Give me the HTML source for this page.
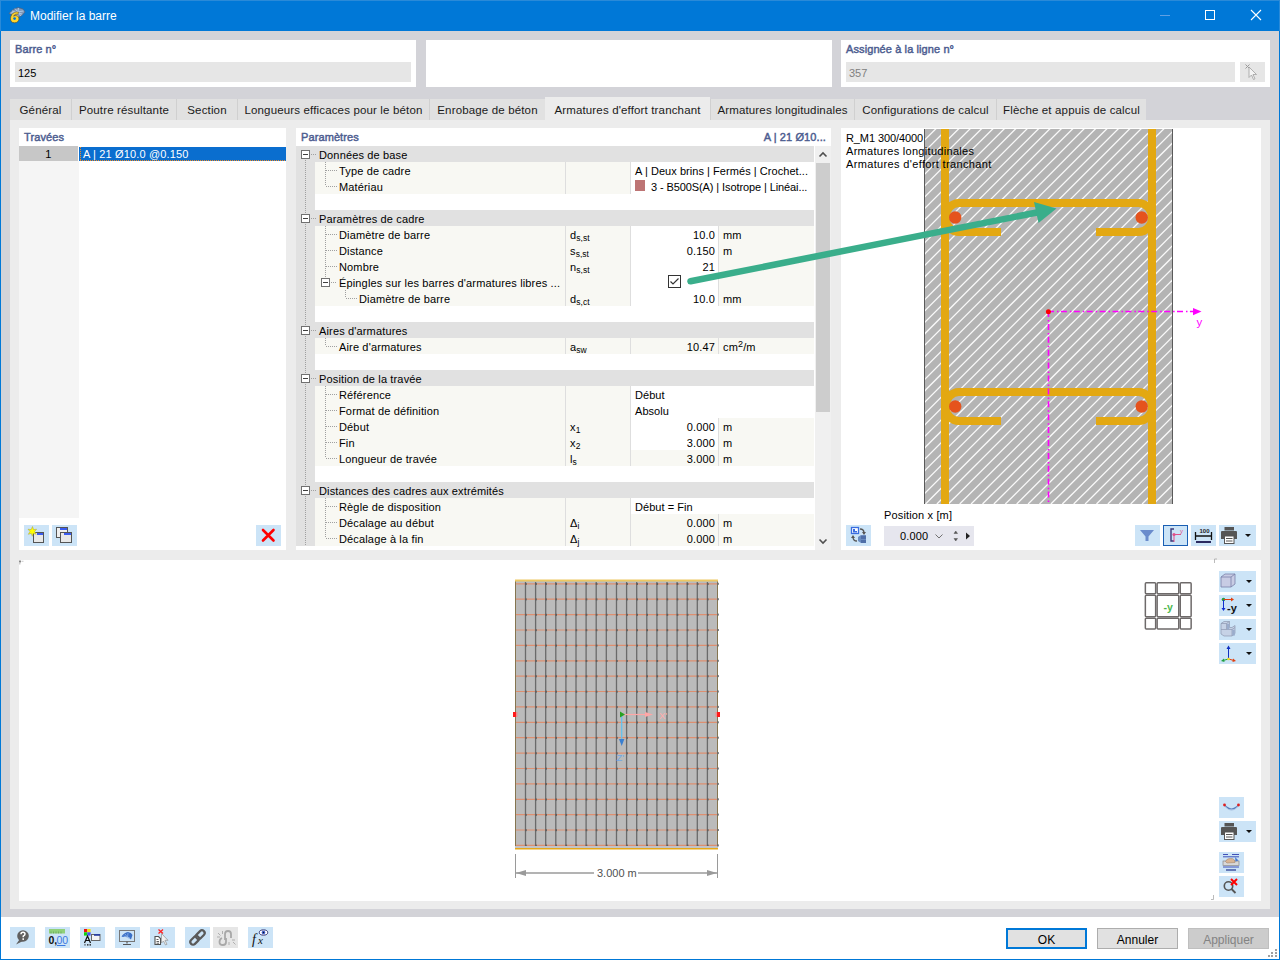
<!DOCTYPE html>
<html><head><meta charset="utf-8">
<style>
*{margin:0;padding:0;box-sizing:border-box}
html,body{width:1280px;height:960px;overflow:hidden;background:#fff}
body{font-family:"Liberation Sans",sans-serif;font-size:12px;color:#000;position:relative}
.a{position:absolute}
.t{position:absolute;white-space:nowrap;line-height:14px}
#win{left:0;top:0;width:1280px;height:960px;background:#0078d7}
#title{left:1px;top:1px;width:1278px;height:30px;background:#0078d7}
#body{left:1px;top:31px;width:1278px;height:886px;background:#d3d3d8}
#foot{left:1px;top:917px;width:1278px;height:42px;background:#fff}
.box{position:absolute;background:#fff}
.lbl{position:absolute;color:#4d5d90;font-weight:normal;-webkit-text-stroke:0.45px #4d5d90;font-size:11px;letter-spacing:0.1px;white-space:nowrap}
.tb{font-size:11px;letter-spacing:0.15px}
.inp{position:absolute;background:#e6e6e6}
.tab{position:absolute;top:99px;height:21px;background:#e1e1e1;border-left:1px solid #d0d0d0;text-align:center;line-height:23px;font-size:11.5px;letter-spacing:0.15px;color:#1a1a1a;white-space:nowrap}
.btn{position:absolute;background:#cce4f7}
.sym sub{font-size:8.5px;vertical-align:-2px;line-height:0;letter-spacing:0}
.sym{}
sup{font-size:9px;vertical-align:4px;line-height:0}
</style></head><body>
<div id="win" class="a"></div>
<div id="title" class="a"></div>
<div class="a" style="left:0;top:0;width:1280px;height:1px;background:#2a8ad8"></div>
<div class="a" style="left:1279px;top:0;width:1px;height:31px;background:#2a8ad8"></div>
<div class="a" style="left:0;top:0;width:1px;height:31px;background:#2a8ad8"></div>
<div class="t" style="left:30px;top:9px;color:#fff;font-size:12px">Modifier la barre</div>
<div id="body" class="a"></div>
<div id="foot" class="a"></div>

<!-- top boxes -->
<div class="box" style="left:10px;top:40px;width:406px;height:47px"></div>
<div class="lbl" style="left:15px;top:43px">Barre n°</div>
<div class="inp" style="left:15px;top:62px;width:396px;height:20px"></div>
<div class="t" style="left:18px;top:66px;font-size:11px">125</div>
<div class="box" style="left:426px;top:40px;width:406px;height:47px"></div>
<div class="box" style="left:841px;top:40px;width:429px;height:47px"></div>
<div class="lbl" style="left:846px;top:43px">Assignée à la ligne n°</div>
<div class="inp" style="left:846px;top:62px;width:389px;height:20px"></div>
<div class="t" style="left:849px;top:66px;font-size:11px;color:#808080">357</div>
<div class="inp" style="left:1240px;top:62px;width:25px;height:20px"></div>

<!-- tabs -->
<div class="a" style="left:10px;top:120px;width:1260px;height:789px;background:#ececec"></div>
<div class="tab" style="left:10px;width:61px;border-left:none">Général</div>
<div class="tab" style="left:71px;width:105px">Poutre résultante</div>
<div class="tab" style="left:176px;width:61px">Section</div>
<div class="tab" style="left:237px;width:192px">Longueurs efficaces pour le béton</div>
<div class="tab" style="left:429px;width:116px">Enrobage de béton</div>
<div class="tab" style="left:545px;top:97px;height:23px;width:165px;background:#ececec;border:none;line-height:27px">Armatures d'effort tranchant</div>
<div class="tab" style="left:710px;width:144px">Armatures longitudinales</div>
<div class="tab" style="left:854px;width:142px">Configurations de calcul</div>
<div class="tab" style="left:996px;width:150px">Flèche et appuis de calcul</div>

<!-- panels -->
<div class="box" style="left:19px;top:128px;width:267px;height:422px"></div>
<div class="box" style="left:296px;top:128px;width:535px;height:422px"></div>
<div class="box" style="left:841px;top:128px;width:420px;height:422px"></div>
<!-- middle panel content -->
<div class="lbl" style="left:301px;top:131px">Paramètres</div>
<div class="lbl" style="left:600px;top:131px;width:226px;text-align:right">A | 21 Ø10...</div>
<div class="a" style="left:296px;top:146px;width:19px;height:400px;background:#e1e1e1"></div>
<div class="a" style="left:296px;top:146px;width:518px;height:16px;background:#e1e1e1"></div>
<div class="t tb" style="left:319px;top:147px;line-height:16px">Données de base</div>
<div class="a" style="left:315px;top:162px;width:499px;height:16px;background:#f8f8f3"></div>
<div class="a" style="left:631px;top:162px;width:183px;height:16px;background:#fff"></div>
<div class="a" style="left:565px;top:162px;width:1px;height:16px;background:#dedede"></div>
<div class="a" style="left:630px;top:162px;width:1px;height:16px;background:#dedede"></div>
<div class="t tb" style="left:339px;top:163px;line-height:16px">Type de cadre</div>
<div class="t tb" style="left:635px;top:163px;line-height:16px;letter-spacing:0.05px">A | Deux brins | Fermés | Crochet...</div>
<div class="a" style="left:315px;top:178px;width:499px;height:16px;background:#f8f8f3"></div>
<div class="a" style="left:631px;top:178px;width:183px;height:16px;background:#fff"></div>
<div class="a" style="left:565px;top:178px;width:1px;height:16px;background:#dedede"></div>
<div class="a" style="left:630px;top:178px;width:1px;height:16px;background:#dedede"></div>
<div class="t tb" style="left:339px;top:179px;line-height:16px">Matériau</div>
<div class="a" style="left:635px;top:180px;width:10px;height:11px;background:#bd7474"></div>
<div class="t tb" style="left:651px;top:179px;line-height:16px;letter-spacing:-0.1px">3 - B500S(A) | Isotrope | Linéai...</div>
<div class="a" style="left:296px;top:210px;width:518px;height:16px;background:#e1e1e1"></div>
<div class="t tb" style="left:319px;top:211px;line-height:16px">Paramètres de cadre</div>
<div class="a" style="left:315px;top:226px;width:499px;height:16px;background:#f8f8f3"></div>
<div class="a" style="left:631px;top:226px;width:87px;height:16px;background:#fff"></div>
<div class="a" style="left:565px;top:226px;width:1px;height:16px;background:#dedede"></div>
<div class="a" style="left:630px;top:226px;width:1px;height:16px;background:#dedede"></div>
<div class="a" style="left:718px;top:226px;width:1px;height:16px;background:#dedede"></div>
<div class="t tb" style="left:339px;top:227px;line-height:16px">Diamètre de barre</div>
<div class="t tb sym" style="left:570px;top:227px;line-height:16px">d<sub>s,st</sub></div>
<div class="t tb" style="left:631px;top:227px;width:84px;text-align:right;line-height:16px">10.0</div>
<div class="t tb" style="left:723px;top:227px;line-height:16px">mm</div>
<div class="a" style="left:315px;top:242px;width:499px;height:16px;background:#f8f8f3"></div>
<div class="a" style="left:631px;top:242px;width:87px;height:16px;background:#fff"></div>
<div class="a" style="left:565px;top:242px;width:1px;height:16px;background:#dedede"></div>
<div class="a" style="left:630px;top:242px;width:1px;height:16px;background:#dedede"></div>
<div class="a" style="left:718px;top:242px;width:1px;height:16px;background:#dedede"></div>
<div class="t tb" style="left:339px;top:243px;line-height:16px">Distance</div>
<div class="t tb sym" style="left:570px;top:243px;line-height:16px">s<sub>s,st</sub></div>
<div class="t tb" style="left:631px;top:243px;width:84px;text-align:right;line-height:16px">0.150</div>
<div class="t tb" style="left:723px;top:243px;line-height:16px">m</div>
<div class="a" style="left:315px;top:258px;width:499px;height:16px;background:#f8f8f3"></div>
<div class="a" style="left:631px;top:258px;width:87px;height:16px;background:#fff"></div>
<div class="a" style="left:565px;top:258px;width:1px;height:16px;background:#dedede"></div>
<div class="a" style="left:630px;top:258px;width:1px;height:16px;background:#dedede"></div>
<div class="a" style="left:718px;top:258px;width:1px;height:16px;background:#dedede"></div>
<div class="t tb" style="left:339px;top:259px;line-height:16px">Nombre</div>
<div class="t tb sym" style="left:570px;top:259px;line-height:16px">n<sub>s,st</sub></div>
<div class="t tb" style="left:631px;top:259px;width:84px;text-align:right;line-height:16px">21</div>
<div class="a" style="left:315px;top:274px;width:499px;height:16px;background:#f8f8f3"></div>
<div class="a" style="left:631px;top:274px;width:87px;height:16px;background:#fff"></div>
<div class="a" style="left:565px;top:274px;width:1px;height:16px;background:#dedede"></div>
<div class="a" style="left:630px;top:274px;width:1px;height:16px;background:#dedede"></div>
<div class="a" style="left:718px;top:274px;width:1px;height:16px;background:#dedede"></div>
<div class="t tb" style="left:339px;top:275px;line-height:16px">Épingles sur les barres d'armatures libres ...</div>
<div class="a" style="left:668px;top:275px;width:13px;height:13px;border:1px solid #333;background:#fff"></div>
<svg class="a" style="left:668px;top:275px" width="13" height="13"><path d="M2.5 6.5 L5 9 L10.5 3.5" stroke="#333" stroke-width="1.2" fill="none"/></svg>
<div class="a" style="left:315px;top:290px;width:499px;height:16px;background:#f8f8f3"></div>
<div class="a" style="left:631px;top:290px;width:87px;height:16px;background:#fff"></div>
<div class="a" style="left:565px;top:290px;width:1px;height:16px;background:#dedede"></div>
<div class="a" style="left:630px;top:290px;width:1px;height:16px;background:#dedede"></div>
<div class="a" style="left:718px;top:290px;width:1px;height:16px;background:#dedede"></div>
<div class="t tb" style="left:359px;top:291px;line-height:16px">Diamètre de barre</div>
<div class="t tb sym" style="left:570px;top:291px;line-height:16px">d<sub>s,ct</sub></div>
<div class="t tb" style="left:631px;top:291px;width:84px;text-align:right;line-height:16px">10.0</div>
<div class="t tb" style="left:723px;top:291px;line-height:16px">mm</div>
<div class="a" style="left:296px;top:322px;width:518px;height:16px;background:#e1e1e1"></div>
<div class="t tb" style="left:319px;top:323px;line-height:16px">Aires d'armatures</div>
<div class="a" style="left:315px;top:338px;width:499px;height:16px;background:#f8f8f3"></div>
<div class="a" style="left:565px;top:338px;width:1px;height:16px;background:#dedede"></div>
<div class="a" style="left:630px;top:338px;width:1px;height:16px;background:#dedede"></div>
<div class="a" style="left:718px;top:338px;width:1px;height:16px;background:#dedede"></div>
<div class="t tb" style="left:339px;top:339px;line-height:16px">Aire d'armatures</div>
<div class="t tb sym" style="left:570px;top:339px;line-height:16px">a<sub>sw</sub></div>
<div class="t tb" style="left:631px;top:339px;width:84px;text-align:right;line-height:16px">10.47</div>
<div class="t tb" style="left:723px;top:339px;line-height:16px">cm<sup>2</sup>/m</div>
<div class="a" style="left:296px;top:370px;width:518px;height:16px;background:#e1e1e1"></div>
<div class="t tb" style="left:319px;top:371px;line-height:16px">Position de la travée</div>
<div class="a" style="left:315px;top:386px;width:499px;height:16px;background:#f8f8f3"></div>
<div class="a" style="left:631px;top:386px;width:183px;height:16px;background:#fff"></div>
<div class="a" style="left:565px;top:386px;width:1px;height:16px;background:#dedede"></div>
<div class="a" style="left:630px;top:386px;width:1px;height:16px;background:#dedede"></div>
<div class="t tb" style="left:339px;top:387px;line-height:16px">Référence</div>
<div class="t tb" style="left:635px;top:387px;line-height:16px;letter-spacing:0.05px">Début</div>
<div class="a" style="left:315px;top:402px;width:499px;height:16px;background:#f8f8f3"></div>
<div class="a" style="left:631px;top:402px;width:183px;height:16px;background:#fff"></div>
<div class="a" style="left:565px;top:402px;width:1px;height:16px;background:#dedede"></div>
<div class="a" style="left:630px;top:402px;width:1px;height:16px;background:#dedede"></div>
<div class="t tb" style="left:339px;top:403px;line-height:16px">Format de définition</div>
<div class="t tb" style="left:635px;top:403px;line-height:16px;letter-spacing:0.05px">Absolu</div>
<div class="a" style="left:315px;top:418px;width:499px;height:16px;background:#f8f8f3"></div>
<div class="a" style="left:631px;top:418px;width:87px;height:16px;background:#fff"></div>
<div class="a" style="left:565px;top:418px;width:1px;height:16px;background:#dedede"></div>
<div class="a" style="left:630px;top:418px;width:1px;height:16px;background:#dedede"></div>
<div class="a" style="left:718px;top:418px;width:1px;height:16px;background:#dedede"></div>
<div class="t tb" style="left:339px;top:419px;line-height:16px">Début</div>
<div class="t tb sym" style="left:570px;top:419px;line-height:16px">x<sub>1</sub></div>
<div class="t tb" style="left:631px;top:419px;width:84px;text-align:right;line-height:16px">0.000</div>
<div class="t tb" style="left:723px;top:419px;line-height:16px">m</div>
<div class="a" style="left:315px;top:434px;width:499px;height:16px;background:#f8f8f3"></div>
<div class="a" style="left:631px;top:434px;width:87px;height:16px;background:#fff"></div>
<div class="a" style="left:565px;top:434px;width:1px;height:16px;background:#dedede"></div>
<div class="a" style="left:630px;top:434px;width:1px;height:16px;background:#dedede"></div>
<div class="a" style="left:718px;top:434px;width:1px;height:16px;background:#dedede"></div>
<div class="t tb" style="left:339px;top:435px;line-height:16px">Fin</div>
<div class="t tb sym" style="left:570px;top:435px;line-height:16px">x<sub>2</sub></div>
<div class="t tb" style="left:631px;top:435px;width:84px;text-align:right;line-height:16px">3.000</div>
<div class="t tb" style="left:723px;top:435px;line-height:16px">m</div>
<div class="a" style="left:315px;top:450px;width:499px;height:16px;background:#f8f8f3"></div>
<div class="a" style="left:565px;top:450px;width:1px;height:16px;background:#dedede"></div>
<div class="a" style="left:630px;top:450px;width:1px;height:16px;background:#dedede"></div>
<div class="a" style="left:718px;top:450px;width:1px;height:16px;background:#dedede"></div>
<div class="t tb" style="left:339px;top:451px;line-height:16px">Longueur de travée</div>
<div class="t tb sym" style="left:570px;top:451px;line-height:16px">l<sub>s</sub></div>
<div class="t tb" style="left:631px;top:451px;width:84px;text-align:right;line-height:16px">3.000</div>
<div class="t tb" style="left:723px;top:451px;line-height:16px">m</div>
<div class="a" style="left:296px;top:482px;width:518px;height:16px;background:#e1e1e1"></div>
<div class="t tb" style="left:319px;top:483px;line-height:16px">Distances des cadres aux extrémités</div>
<div class="a" style="left:315px;top:498px;width:499px;height:16px;background:#f8f8f3"></div>
<div class="a" style="left:631px;top:498px;width:183px;height:16px;background:#fff"></div>
<div class="a" style="left:565px;top:498px;width:1px;height:16px;background:#dedede"></div>
<div class="a" style="left:630px;top:498px;width:1px;height:16px;background:#dedede"></div>
<div class="t tb" style="left:339px;top:499px;line-height:16px">Règle de disposition</div>
<div class="t tb" style="left:635px;top:499px;line-height:16px;letter-spacing:0.05px">Début = Fin</div>
<div class="a" style="left:315px;top:514px;width:499px;height:16px;background:#f8f8f3"></div>
<div class="a" style="left:565px;top:514px;width:1px;height:16px;background:#dedede"></div>
<div class="a" style="left:630px;top:514px;width:1px;height:16px;background:#dedede"></div>
<div class="a" style="left:718px;top:514px;width:1px;height:16px;background:#dedede"></div>
<div class="t tb" style="left:339px;top:515px;line-height:16px">Décalage au début</div>
<div class="t tb sym" style="left:570px;top:515px;line-height:16px">&Delta;<sub>i</sub></div>
<div class="t tb" style="left:631px;top:515px;width:84px;text-align:right;line-height:16px">0.000</div>
<div class="t tb" style="left:723px;top:515px;line-height:16px">m</div>
<div class="a" style="left:315px;top:530px;width:499px;height:16px;background:#f8f8f3"></div>
<div class="a" style="left:565px;top:530px;width:1px;height:16px;background:#dedede"></div>
<div class="a" style="left:630px;top:530px;width:1px;height:16px;background:#dedede"></div>
<div class="a" style="left:718px;top:530px;width:1px;height:16px;background:#dedede"></div>
<div class="t tb" style="left:339px;top:531px;line-height:16px">Décalage à la fin</div>
<div class="t tb sym" style="left:570px;top:531px;line-height:16px">&Delta;<sub>j</sub></div>
<div class="t tb" style="left:631px;top:531px;width:84px;text-align:right;line-height:16px">0.000</div>
<div class="t tb" style="left:723px;top:531px;line-height:16px">m</div>
<svg class="a" style="left:0;top:0;pointer-events:none" width="1280" height="960" shape-rendering="crispEdges"><line x1="305.5" y1="160" x2="305.5" y2="546" stroke="#a0a0a0" stroke-dasharray="1,1"/><rect x="301.5" y="150.5" width="8" height="8" fill="#fff" stroke="#707070"/><line x1="303" y1="154.5" x2="308" y2="154.5" stroke="#404040"/><line x1="311" y1="154.5" x2="317" y2="154.5" stroke="#a0a0a0" stroke-dasharray="1,1"/><rect x="301.5" y="214.5" width="8" height="8" fill="#fff" stroke="#707070"/><line x1="303" y1="218.5" x2="308" y2="218.5" stroke="#404040"/><line x1="311" y1="218.5" x2="317" y2="218.5" stroke="#a0a0a0" stroke-dasharray="1,1"/><rect x="301.5" y="326.5" width="8" height="8" fill="#fff" stroke="#707070"/><line x1="303" y1="330.5" x2="308" y2="330.5" stroke="#404040"/><line x1="311" y1="330.5" x2="317" y2="330.5" stroke="#a0a0a0" stroke-dasharray="1,1"/><rect x="301.5" y="374.5" width="8" height="8" fill="#fff" stroke="#707070"/><line x1="303" y1="378.5" x2="308" y2="378.5" stroke="#404040"/><line x1="311" y1="378.5" x2="317" y2="378.5" stroke="#a0a0a0" stroke-dasharray="1,1"/><rect x="301.5" y="486.5" width="8" height="8" fill="#fff" stroke="#707070"/><line x1="303" y1="490.5" x2="308" y2="490.5" stroke="#404040"/><line x1="311" y1="490.5" x2="317" y2="490.5" stroke="#a0a0a0" stroke-dasharray="1,1"/><line x1="325.5" y1="162" x2="325.5" y2="186" stroke="#a0a0a0" stroke-dasharray="1,1"/><line x1="326" y1="170.5" x2="337" y2="170.5" stroke="#a0a0a0" stroke-dasharray="1,1"/><line x1="326" y1="186.5" x2="337" y2="186.5" stroke="#a0a0a0" stroke-dasharray="1,1"/><line x1="325.5" y1="226" x2="325.5" y2="282" stroke="#a0a0a0" stroke-dasharray="1,1"/><line x1="326" y1="234.5" x2="337" y2="234.5" stroke="#a0a0a0" stroke-dasharray="1,1"/><line x1="326" y1="250.5" x2="337" y2="250.5" stroke="#a0a0a0" stroke-dasharray="1,1"/><line x1="326" y1="266.5" x2="337" y2="266.5" stroke="#a0a0a0" stroke-dasharray="1,1"/><rect x="321.5" y="278.5" width="8" height="8" fill="#fff" stroke="#707070"/><line x1="323" y1="282.5" x2="328" y2="282.5" stroke="#404040"/><line x1="331" y1="282.5" x2="337" y2="282.5" stroke="#a0a0a0" stroke-dasharray="1,1"/><line x1="345.5" y1="290" x2="345.5" y2="298" stroke="#a0a0a0" stroke-dasharray="1,1"/><line x1="346" y1="298.5" x2="357" y2="298.5" stroke="#a0a0a0" stroke-dasharray="1,1"/><line x1="325.5" y1="338" x2="325.5" y2="346" stroke="#a0a0a0" stroke-dasharray="1,1"/><line x1="326" y1="346.5" x2="337" y2="346.5" stroke="#a0a0a0" stroke-dasharray="1,1"/><line x1="325.5" y1="386" x2="325.5" y2="458" stroke="#a0a0a0" stroke-dasharray="1,1"/><line x1="326" y1="394.5" x2="337" y2="394.5" stroke="#a0a0a0" stroke-dasharray="1,1"/><line x1="326" y1="410.5" x2="337" y2="410.5" stroke="#a0a0a0" stroke-dasharray="1,1"/><line x1="326" y1="426.5" x2="337" y2="426.5" stroke="#a0a0a0" stroke-dasharray="1,1"/><line x1="326" y1="442.5" x2="337" y2="442.5" stroke="#a0a0a0" stroke-dasharray="1,1"/><line x1="326" y1="458.5" x2="337" y2="458.5" stroke="#a0a0a0" stroke-dasharray="1,1"/><line x1="325.5" y1="498" x2="325.5" y2="538" stroke="#a0a0a0" stroke-dasharray="1,1"/><line x1="326" y1="506.5" x2="337" y2="506.5" stroke="#a0a0a0" stroke-dasharray="1,1"/><line x1="326" y1="522.5" x2="337" y2="522.5" stroke="#a0a0a0" stroke-dasharray="1,1"/><line x1="326" y1="538.5" x2="337" y2="538.5" stroke="#a0a0a0" stroke-dasharray="1,1"/></svg>
<div class="a" style="left:815px;top:146px;width:16px;height:404px;background:#f0f0f0"></div>
<div class="a" style="left:816px;top:163px;width:14px;height:249px;background:#cdcdcd"></div>
<svg class="a" style="left:815px;top:146px" width="16" height="17"><path d="M4.5 10.5 L8 7 L11.5 10.5" stroke="#505050" stroke-width="1.6" fill="none"/></svg>
<svg class="a" style="left:815px;top:533px" width="16" height="17"><path d="M4.5 6.5 L8 10 L11.5 6.5" stroke="#505050" stroke-width="1.6" fill="none"/></svg>
<div class="box" style="left:19px;top:560px;width:1242px;height:341px"></div>
<!-- left panel content -->
<div class="lbl" style="left:24px;top:131px">Travées</div>
<div class="a" style="left:19px;top:161px;width:60px;height:357px;background:#f5f5f5"></div>
<div class="a" style="left:19px;top:146px;width:59px;height:15px;background:#c7c7c7"></div>
<div class="t tb" style="left:19px;top:147px;width:59px;text-align:center;line-height:15px">1</div>
<div class="a" style="left:79px;top:147px;width:207px;height:14px;background:#0a6ecf"></div>
<svg class="a" style="left:79px;top:146px" width="207" height="16" shape-rendering="crispEdges"><line x1="1.5" y1="1" x2="1.5" y2="15" stroke="#f08a24" stroke-dasharray="1,1"/><line x1="1" y1="14.5" x2="207" y2="14.5" stroke="#f08a24" stroke-dasharray="1,1"/></svg>
<div class="t tb" style="left:83px;top:147px;color:#fff;line-height:15px">A | 21 Ø10.0 @0.150</div>
<div class="btn" style="left:24px;top:525px;width:25px;height:21px"></div>
<svg class="a" style="left:24px;top:525px" width="25" height="21">
 <rect x="9.5" y="7.5" width="10" height="10" fill="#e8e8e8" stroke="#555"/>
 <rect x="13" y="8" width="6" height="2" fill="#3a5cf0"/>
 <path d="M8.5 1.5 L9.6 4.6 L12.6 4.2 L10.6 6.5 L12.2 9.3 L9.2 8.4 L8.3 11.3 L7.3 8.4 L4.3 9.3 L6 6.5 L4 4.2 L7.2 4.6 Z" fill="#ffff00" stroke="#a8a040" stroke-width="0.5"/>
</svg>
<div class="btn" style="left:52px;top:525px;width:25px;height:21px"></div>
<svg class="a" style="left:52px;top:525px" width="25" height="21">
 <rect x="4.5" y="2.5" width="11" height="10" fill="#f0f0f0" stroke="#555"/>
 <rect x="8" y="3" width="7" height="2" fill="#3a5cf0"/>
 <rect x="8.5" y="7.5" width="11" height="10" fill="#e8e8e8" stroke="#555"/>
 <rect x="12" y="8" width="7" height="2" fill="#3a5cf0"/>
</svg>
<div class="btn" style="left:256px;top:525px;width:25px;height:21px"></div>
<svg class="a" style="left:256px;top:525px" width="25" height="21"><path d="M7 5 L17.5 15.5 M17.5 5 L7 15.5" stroke="#ff0000" stroke-width="2.6" stroke-linecap="round"/></svg>

<!-- right panel -->
<svg class="a" style="left:0;top:0;pointer-events:none" width="1280" height="960">
<defs><clipPath id="secclip"><rect x="925" y="129" width="247" height="375"/></clipPath></defs>
<rect x="924" y="129" width="249" height="375" fill="#b4b4b4"/>
<g clip-path="url(#secclip)" stroke="#fafafa" stroke-width="1.3"><line x1="526.50" y1="504" x2="902.50" y2="128"/><line x1="537.90" y1="504" x2="913.90" y2="128"/><line x1="549.30" y1="504" x2="925.30" y2="128"/><line x1="560.70" y1="504" x2="936.70" y2="128"/><line x1="572.10" y1="504" x2="948.10" y2="128"/><line x1="583.50" y1="504" x2="959.50" y2="128"/><line x1="594.90" y1="504" x2="970.90" y2="128"/><line x1="606.30" y1="504" x2="982.30" y2="128"/><line x1="617.70" y1="504" x2="993.70" y2="128"/><line x1="629.10" y1="504" x2="1005.10" y2="128"/><line x1="640.50" y1="504" x2="1016.50" y2="128"/><line x1="651.90" y1="504" x2="1027.90" y2="128"/><line x1="663.30" y1="504" x2="1039.30" y2="128"/><line x1="674.70" y1="504" x2="1050.70" y2="128"/><line x1="686.10" y1="504" x2="1062.10" y2="128"/><line x1="697.50" y1="504" x2="1073.50" y2="128"/><line x1="708.90" y1="504" x2="1084.90" y2="128"/><line x1="720.30" y1="504" x2="1096.30" y2="128"/><line x1="731.70" y1="504" x2="1107.70" y2="128"/><line x1="743.10" y1="504" x2="1119.10" y2="128"/><line x1="754.50" y1="504" x2="1130.50" y2="128"/><line x1="765.90" y1="504" x2="1141.90" y2="128"/><line x1="777.30" y1="504" x2="1153.30" y2="128"/><line x1="788.70" y1="504" x2="1164.70" y2="128"/><line x1="800.10" y1="504" x2="1176.10" y2="128"/><line x1="811.50" y1="504" x2="1187.50" y2="128"/><line x1="822.90" y1="504" x2="1198.90" y2="128"/><line x1="834.30" y1="504" x2="1210.30" y2="128"/><line x1="845.70" y1="504" x2="1221.70" y2="128"/><line x1="857.10" y1="504" x2="1233.10" y2="128"/><line x1="868.50" y1="504" x2="1244.50" y2="128"/><line x1="879.90" y1="504" x2="1255.90" y2="128"/><line x1="891.30" y1="504" x2="1267.30" y2="128"/><line x1="902.70" y1="504" x2="1278.70" y2="128"/><line x1="914.10" y1="504" x2="1290.10" y2="128"/><line x1="925.50" y1="504" x2="1301.50" y2="128"/><line x1="936.90" y1="504" x2="1312.90" y2="128"/><line x1="948.30" y1="504" x2="1324.30" y2="128"/><line x1="959.70" y1="504" x2="1335.70" y2="128"/><line x1="971.10" y1="504" x2="1347.10" y2="128"/><line x1="982.50" y1="504" x2="1358.50" y2="128"/><line x1="993.90" y1="504" x2="1369.90" y2="128"/><line x1="1005.30" y1="504" x2="1381.30" y2="128"/><line x1="1016.70" y1="504" x2="1392.70" y2="128"/><line x1="1028.10" y1="504" x2="1404.10" y2="128"/><line x1="1039.50" y1="504" x2="1415.50" y2="128"/><line x1="1050.90" y1="504" x2="1426.90" y2="128"/><line x1="1062.30" y1="504" x2="1438.30" y2="128"/><line x1="1073.70" y1="504" x2="1449.70" y2="128"/><line x1="1085.10" y1="504" x2="1461.10" y2="128"/><line x1="1096.50" y1="504" x2="1472.50" y2="128"/><line x1="1107.90" y1="504" x2="1483.90" y2="128"/><line x1="1119.30" y1="504" x2="1495.30" y2="128"/><line x1="1130.70" y1="504" x2="1506.70" y2="128"/><line x1="1142.10" y1="504" x2="1518.10" y2="128"/><line x1="1153.50" y1="504" x2="1529.50" y2="128"/><line x1="1164.90" y1="504" x2="1540.90" y2="128"/><line x1="1176.30" y1="504" x2="1552.30" y2="128"/></g>
<rect x="924" y="129" width="1" height="375" fill="#5a5a5a"/>
<rect x="1172" y="129" width="1" height="375" fill="#5a5a5a"/>
<g fill="none" stroke="#e3a812" stroke-width="8">
<path d="M945 129 L945 504 M1152 129 L1152 504"/>
<path d="M1001 232 L959 232 A13.4 14.5 0 0 1 959 203 L1138.6 203 A13.4 14.5 0 0 1 1138.6 232 L1096 232"/>
<path d="M1001 421 L959 421 A13.4 14.5 0 0 1 959 392 L1138.6 392 A13.4 14.5 0 0 1 1138.6 421 L1096 421"/>
</g>
<g fill="#e5531d"><circle cx="955.2" cy="217.5" r="6.2"/><circle cx="1141.7" cy="217.5" r="6.2"/><circle cx="955.2" cy="406.5" r="6.2"/><circle cx="1141.7" cy="406.5" r="6.2"/></g>
<g stroke="#ff00ff" stroke-width="1.6" fill="none">
<line x1="1048.5" y1="311" x2="1048.5" y2="504" stroke-dasharray="6,3,1.5,2.4"/>
<line x1="1048" y1="311.5" x2="1194" y2="311.5" stroke-dasharray="6,3,1.5,2.4"/>
</g>
<path d="M1193 308 L1201.5 311.6 L1193 315.3 Z" fill="#ff00ff"/>
<text x="1196.5" y="326" font-family="Liberation Sans" font-size="11.5" fill="#ff00ff">y</text>
<circle cx="1048.4" cy="311.7" r="2.5" fill="#ff0000"/>
<line x1="690.5" y1="281.3" x2="1037" y2="212.5" stroke="#3aae8b" stroke-width="6.5" stroke-linecap="round"/>
<path d="M1034 202 L1056.5 208.6 L1038.5 223 Z" fill="#3aae8b"/>
</svg>
<div class="t" style="left:846px;top:132px;font-size:11px;line-height:13px;letter-spacing:-0.1px">R_M1 300/4000</div>
<div class="t" style="left:846px;top:145px;font-size:11px;line-height:13px;letter-spacing:0.3px">Armatures longitudinales</div>
<div class="t" style="left:846px;top:158px;font-size:11px;line-height:13px;letter-spacing:0.35px">Armatures d'effort tranchant</div>
<div class="t tb" style="left:884px;top:508px">Position x [m]</div>
<div class="btn" style="left:846px;top:525px;width:25px;height:21px"></div>
<svg class="a" style="left:846px;top:525px" width="25" height="21">
 <rect x="5.5" y="2.5" width="7" height="6" fill="#fff" stroke="#3a6de0" stroke-width="1.3"/>
 <path d="M7 4 L7 7.5 L11 7.5 L11 6 L9 6 L9 4 Z" fill="#3a6de0"/>
 <path d="M14 4 Q18 4 18 8" stroke="#555" stroke-width="1.3" fill="none"/><path d="M16 7 L18 10 L20 7 Z" fill="#555"/>
 <path d="M11 16 Q7 16 7 12" stroke="#555" stroke-width="1.3" fill="none"/><path d="M5 13 L7 10 L9 13 Z" fill="#555"/>
 <path d="M12 12 L15 10 L20 10 L20 18 L15 18 L12 16 Z" fill="#6a8cc0"/><rect x="15" y="11" width="5" height="3" fill="#4f6fa8"/><rect x="15" y="15" width="5" height="3" fill="#4f6fa8"/>
</svg>
<div class="a" style="left:884px;top:526px;width:90px;height:20px;background:#e6e6ee"></div>
<div class="t tb" style="left:900px;top:529px;line-height:14px">0.000</div>
<svg class="a" style="left:930px;top:526px" width="44" height="20">
 <path d="M5.5 8.5 L9 12 L12.5 8.5" stroke="#707070" stroke-width="1" fill="none"/>
 <path d="M24 7.5 L27.5 7.5 L25.75 5 Z M24 12.5 L27.5 12.5 L25.75 15 Z" fill="#555" stroke="#555" stroke-width="0.5"/>
 <path d="M36 6.5 L40 10 L36 13.5 Z" fill="#222"/>
</svg>
<div class="btn" style="left:1135px;top:525px;width:25px;height:21px"></div>
<svg class="a" style="left:1135px;top:525px" width="25" height="21"><path d="M5 5 L19 5 L13.5 11.5 L13.5 16 L10.5 16 L10.5 11.5 Z" fill="#6a8ccc"/></svg>
<div class="a" style="left:1163px;top:525px;width:25px;height:21px;background:#cce4f7;border:1px solid #1a5fb4"></div>
<svg class="a" style="left:1163px;top:525px" width="25" height="21">
 <path d="M11 4 L8 4 L8 16 L11 16" stroke="#3a3a7a" stroke-width="1.4" fill="none"/>
 <circle cx="11" cy="9.5" r="1.6" fill="#e0508a"/><path d="M11 9.5 L18 9.5 M11 9.5 L11 17" stroke="#e0508a" stroke-width="1"/>
 <text x="17" y="8" font-size="6" fill="#e0508a" font-family="Liberation Sans">y</text>
</svg>
<div class="btn" style="left:1191px;top:525px;width:25px;height:21px"></div>
<svg class="a" style="left:1191px;top:525px" width="25" height="21">
 <path d="M4.5 7 L4.5 15 M20.5 7 L20.5 15 M4.5 11 L20.5 11" stroke="#111" stroke-width="1.3"/>
 <rect x="5" y="16" width="15" height="2" fill="#2a2a60"/>
 <text x="8.5" y="8" font-size="6" font-weight="bold" fill="#222" font-family="Liberation Sans">100</text>
</svg>
<div class="btn" style="left:1219px;top:525px;width:37px;height:21px"></div>
<svg class="a" style="left:1219px;top:525px" width="37" height="21">
 <rect x="5.5" y="2" width="9.5" height="3.5" fill="#555"/>
 <path d="M2 7 Q2 6 3 6 L17 6 Q18 6 18 7 L18 14 L2 14 Z" fill="#555"/>
 <rect x="5.5" y="11" width="9.5" height="7.5" fill="#fff" stroke="#555" stroke-width="1"/>
 <path d="M7 13.5 L13.5 13.5 M7 16 L13.5 16" stroke="#555" stroke-width="1"/>
 <path d="M26 9 L32 9 L29 12 Z" fill="#111"/>
</svg>

<!-- 3D view -->
<svg class="a" style="left:0;top:0;pointer-events:none" width="1280" height="960">
<rect x="515" y="580" width="203" height="269" fill="#bbbbbb"/><rect x="515" y="581" width="203" height="3" fill="#b9bcc0"/><line x1="515" y1="583.8" x2="718" y2="583.8" stroke="#dd8f70" stroke-width="1.2"/><line x1="515" y1="599.2" x2="718" y2="599.2" stroke="#dd8f70" stroke-width="1.2"/><line x1="515" y1="614.6" x2="718" y2="614.6" stroke="#dd8f70" stroke-width="1.2"/><line x1="515" y1="630.0" x2="718" y2="630.0" stroke="#dd8f70" stroke-width="1.2"/><line x1="515" y1="645.4" x2="718" y2="645.4" stroke="#dd8f70" stroke-width="1.2"/><line x1="515" y1="660.8" x2="718" y2="660.8" stroke="#dd8f70" stroke-width="1.2"/><line x1="515" y1="676.1" x2="718" y2="676.1" stroke="#dd8f70" stroke-width="1.2"/><line x1="515" y1="691.5" x2="718" y2="691.5" stroke="#dd8f70" stroke-width="1.2"/><line x1="515" y1="706.9" x2="718" y2="706.9" stroke="#dd8f70" stroke-width="1.2"/><line x1="515" y1="722.3" x2="718" y2="722.3" stroke="#dd8f70" stroke-width="1.2"/><line x1="515" y1="737.7" x2="718" y2="737.7" stroke="#dd8f70" stroke-width="1.2"/><line x1="515" y1="753.1" x2="718" y2="753.1" stroke="#dd8f70" stroke-width="1.2"/><line x1="515" y1="768.5" x2="718" y2="768.5" stroke="#dd8f70" stroke-width="1.2"/><line x1="515" y1="783.9" x2="718" y2="783.9" stroke="#dd8f70" stroke-width="1.2"/><line x1="515" y1="799.3" x2="718" y2="799.3" stroke="#dd8f70" stroke-width="1.2"/><line x1="515" y1="814.6" x2="718" y2="814.6" stroke="#dd8f70" stroke-width="1.2"/><line x1="515" y1="830.0" x2="718" y2="830.0" stroke="#dd8f70" stroke-width="1.2"/><line x1="515" y1="845.4" x2="718" y2="845.4" stroke="#dd8f70" stroke-width="1.2"/><line x1="525.5" y1="582" x2="525.5" y2="848" stroke="#6a6a6a" stroke-width="1.3"/><rect x="525.1" y="583.0" width="1.6" height="2" fill="#5e5e5e"/><rect x="525.1" y="598.4" width="1.6" height="2" fill="#5e5e5e"/><rect x="525.1" y="613.8" width="1.6" height="2" fill="#5e5e5e"/><rect x="525.1" y="629.2" width="1.6" height="2" fill="#5e5e5e"/><rect x="525.1" y="644.6" width="1.6" height="2" fill="#5e5e5e"/><rect x="525.1" y="660.0" width="1.6" height="2" fill="#5e5e5e"/><rect x="525.1" y="675.3" width="1.6" height="2" fill="#5e5e5e"/><rect x="525.1" y="690.7" width="1.6" height="2" fill="#5e5e5e"/><rect x="525.1" y="706.1" width="1.6" height="2" fill="#5e5e5e"/><rect x="525.1" y="721.5" width="1.6" height="2" fill="#5e5e5e"/><rect x="525.1" y="736.9" width="1.6" height="2" fill="#5e5e5e"/><rect x="525.1" y="752.3" width="1.6" height="2" fill="#5e5e5e"/><rect x="525.1" y="767.7" width="1.6" height="2" fill="#5e5e5e"/><rect x="525.1" y="783.1" width="1.6" height="2" fill="#5e5e5e"/><rect x="525.1" y="798.5" width="1.6" height="2" fill="#5e5e5e"/><rect x="525.1" y="813.9" width="1.6" height="2" fill="#5e5e5e"/><rect x="525.1" y="829.2" width="1.6" height="2" fill="#5e5e5e"/><rect x="525.1" y="844.6" width="1.6" height="2" fill="#5e5e5e"/><line x1="535.6" y1="582" x2="535.6" y2="848" stroke="#6a6a6a" stroke-width="1.3"/><rect x="535.2" y="583.0" width="1.6" height="2" fill="#5e5e5e"/><rect x="535.2" y="598.4" width="1.6" height="2" fill="#5e5e5e"/><rect x="535.2" y="613.8" width="1.6" height="2" fill="#5e5e5e"/><rect x="535.2" y="629.2" width="1.6" height="2" fill="#5e5e5e"/><rect x="535.2" y="644.6" width="1.6" height="2" fill="#5e5e5e"/><rect x="535.2" y="660.0" width="1.6" height="2" fill="#5e5e5e"/><rect x="535.2" y="675.3" width="1.6" height="2" fill="#5e5e5e"/><rect x="535.2" y="690.7" width="1.6" height="2" fill="#5e5e5e"/><rect x="535.2" y="706.1" width="1.6" height="2" fill="#5e5e5e"/><rect x="535.2" y="721.5" width="1.6" height="2" fill="#5e5e5e"/><rect x="535.2" y="736.9" width="1.6" height="2" fill="#5e5e5e"/><rect x="535.2" y="752.3" width="1.6" height="2" fill="#5e5e5e"/><rect x="535.2" y="767.7" width="1.6" height="2" fill="#5e5e5e"/><rect x="535.2" y="783.1" width="1.6" height="2" fill="#5e5e5e"/><rect x="535.2" y="798.5" width="1.6" height="2" fill="#5e5e5e"/><rect x="535.2" y="813.9" width="1.6" height="2" fill="#5e5e5e"/><rect x="535.2" y="829.2" width="1.6" height="2" fill="#5e5e5e"/><rect x="535.2" y="844.6" width="1.6" height="2" fill="#5e5e5e"/><line x1="545.7" y1="582" x2="545.7" y2="848" stroke="#6a6a6a" stroke-width="1.3"/><rect x="545.3" y="583.0" width="1.6" height="2" fill="#5e5e5e"/><rect x="545.3" y="598.4" width="1.6" height="2" fill="#5e5e5e"/><rect x="545.3" y="613.8" width="1.6" height="2" fill="#5e5e5e"/><rect x="545.3" y="629.2" width="1.6" height="2" fill="#5e5e5e"/><rect x="545.3" y="644.6" width="1.6" height="2" fill="#5e5e5e"/><rect x="545.3" y="660.0" width="1.6" height="2" fill="#5e5e5e"/><rect x="545.3" y="675.3" width="1.6" height="2" fill="#5e5e5e"/><rect x="545.3" y="690.7" width="1.6" height="2" fill="#5e5e5e"/><rect x="545.3" y="706.1" width="1.6" height="2" fill="#5e5e5e"/><rect x="545.3" y="721.5" width="1.6" height="2" fill="#5e5e5e"/><rect x="545.3" y="736.9" width="1.6" height="2" fill="#5e5e5e"/><rect x="545.3" y="752.3" width="1.6" height="2" fill="#5e5e5e"/><rect x="545.3" y="767.7" width="1.6" height="2" fill="#5e5e5e"/><rect x="545.3" y="783.1" width="1.6" height="2" fill="#5e5e5e"/><rect x="545.3" y="798.5" width="1.6" height="2" fill="#5e5e5e"/><rect x="545.3" y="813.9" width="1.6" height="2" fill="#5e5e5e"/><rect x="545.3" y="829.2" width="1.6" height="2" fill="#5e5e5e"/><rect x="545.3" y="844.6" width="1.6" height="2" fill="#5e5e5e"/><line x1="555.8" y1="582" x2="555.8" y2="848" stroke="#6a6a6a" stroke-width="1.3"/><rect x="555.4" y="583.0" width="1.6" height="2" fill="#5e5e5e"/><rect x="555.4" y="598.4" width="1.6" height="2" fill="#5e5e5e"/><rect x="555.4" y="613.8" width="1.6" height="2" fill="#5e5e5e"/><rect x="555.4" y="629.2" width="1.6" height="2" fill="#5e5e5e"/><rect x="555.4" y="644.6" width="1.6" height="2" fill="#5e5e5e"/><rect x="555.4" y="660.0" width="1.6" height="2" fill="#5e5e5e"/><rect x="555.4" y="675.3" width="1.6" height="2" fill="#5e5e5e"/><rect x="555.4" y="690.7" width="1.6" height="2" fill="#5e5e5e"/><rect x="555.4" y="706.1" width="1.6" height="2" fill="#5e5e5e"/><rect x="555.4" y="721.5" width="1.6" height="2" fill="#5e5e5e"/><rect x="555.4" y="736.9" width="1.6" height="2" fill="#5e5e5e"/><rect x="555.4" y="752.3" width="1.6" height="2" fill="#5e5e5e"/><rect x="555.4" y="767.7" width="1.6" height="2" fill="#5e5e5e"/><rect x="555.4" y="783.1" width="1.6" height="2" fill="#5e5e5e"/><rect x="555.4" y="798.5" width="1.6" height="2" fill="#5e5e5e"/><rect x="555.4" y="813.9" width="1.6" height="2" fill="#5e5e5e"/><rect x="555.4" y="829.2" width="1.6" height="2" fill="#5e5e5e"/><rect x="555.4" y="844.6" width="1.6" height="2" fill="#5e5e5e"/><line x1="565.9" y1="582" x2="565.9" y2="848" stroke="#6a6a6a" stroke-width="1.3"/><rect x="565.5" y="583.0" width="1.6" height="2" fill="#5e5e5e"/><rect x="565.5" y="598.4" width="1.6" height="2" fill="#5e5e5e"/><rect x="565.5" y="613.8" width="1.6" height="2" fill="#5e5e5e"/><rect x="565.5" y="629.2" width="1.6" height="2" fill="#5e5e5e"/><rect x="565.5" y="644.6" width="1.6" height="2" fill="#5e5e5e"/><rect x="565.5" y="660.0" width="1.6" height="2" fill="#5e5e5e"/><rect x="565.5" y="675.3" width="1.6" height="2" fill="#5e5e5e"/><rect x="565.5" y="690.7" width="1.6" height="2" fill="#5e5e5e"/><rect x="565.5" y="706.1" width="1.6" height="2" fill="#5e5e5e"/><rect x="565.5" y="721.5" width="1.6" height="2" fill="#5e5e5e"/><rect x="565.5" y="736.9" width="1.6" height="2" fill="#5e5e5e"/><rect x="565.5" y="752.3" width="1.6" height="2" fill="#5e5e5e"/><rect x="565.5" y="767.7" width="1.6" height="2" fill="#5e5e5e"/><rect x="565.5" y="783.1" width="1.6" height="2" fill="#5e5e5e"/><rect x="565.5" y="798.5" width="1.6" height="2" fill="#5e5e5e"/><rect x="565.5" y="813.9" width="1.6" height="2" fill="#5e5e5e"/><rect x="565.5" y="829.2" width="1.6" height="2" fill="#5e5e5e"/><rect x="565.5" y="844.6" width="1.6" height="2" fill="#5e5e5e"/><line x1="576.0" y1="582" x2="576.0" y2="848" stroke="#6a6a6a" stroke-width="1.3"/><rect x="575.6" y="583.0" width="1.6" height="2" fill="#5e5e5e"/><rect x="575.6" y="598.4" width="1.6" height="2" fill="#5e5e5e"/><rect x="575.6" y="613.8" width="1.6" height="2" fill="#5e5e5e"/><rect x="575.6" y="629.2" width="1.6" height="2" fill="#5e5e5e"/><rect x="575.6" y="644.6" width="1.6" height="2" fill="#5e5e5e"/><rect x="575.6" y="660.0" width="1.6" height="2" fill="#5e5e5e"/><rect x="575.6" y="675.3" width="1.6" height="2" fill="#5e5e5e"/><rect x="575.6" y="690.7" width="1.6" height="2" fill="#5e5e5e"/><rect x="575.6" y="706.1" width="1.6" height="2" fill="#5e5e5e"/><rect x="575.6" y="721.5" width="1.6" height="2" fill="#5e5e5e"/><rect x="575.6" y="736.9" width="1.6" height="2" fill="#5e5e5e"/><rect x="575.6" y="752.3" width="1.6" height="2" fill="#5e5e5e"/><rect x="575.6" y="767.7" width="1.6" height="2" fill="#5e5e5e"/><rect x="575.6" y="783.1" width="1.6" height="2" fill="#5e5e5e"/><rect x="575.6" y="798.5" width="1.6" height="2" fill="#5e5e5e"/><rect x="575.6" y="813.9" width="1.6" height="2" fill="#5e5e5e"/><rect x="575.6" y="829.2" width="1.6" height="2" fill="#5e5e5e"/><rect x="575.6" y="844.6" width="1.6" height="2" fill="#5e5e5e"/><line x1="586.1" y1="582" x2="586.1" y2="848" stroke="#6a6a6a" stroke-width="1.3"/><rect x="585.7" y="583.0" width="1.6" height="2" fill="#5e5e5e"/><rect x="585.7" y="598.4" width="1.6" height="2" fill="#5e5e5e"/><rect x="585.7" y="613.8" width="1.6" height="2" fill="#5e5e5e"/><rect x="585.7" y="629.2" width="1.6" height="2" fill="#5e5e5e"/><rect x="585.7" y="644.6" width="1.6" height="2" fill="#5e5e5e"/><rect x="585.7" y="660.0" width="1.6" height="2" fill="#5e5e5e"/><rect x="585.7" y="675.3" width="1.6" height="2" fill="#5e5e5e"/><rect x="585.7" y="690.7" width="1.6" height="2" fill="#5e5e5e"/><rect x="585.7" y="706.1" width="1.6" height="2" fill="#5e5e5e"/><rect x="585.7" y="721.5" width="1.6" height="2" fill="#5e5e5e"/><rect x="585.7" y="736.9" width="1.6" height="2" fill="#5e5e5e"/><rect x="585.7" y="752.3" width="1.6" height="2" fill="#5e5e5e"/><rect x="585.7" y="767.7" width="1.6" height="2" fill="#5e5e5e"/><rect x="585.7" y="783.1" width="1.6" height="2" fill="#5e5e5e"/><rect x="585.7" y="798.5" width="1.6" height="2" fill="#5e5e5e"/><rect x="585.7" y="813.9" width="1.6" height="2" fill="#5e5e5e"/><rect x="585.7" y="829.2" width="1.6" height="2" fill="#5e5e5e"/><rect x="585.7" y="844.6" width="1.6" height="2" fill="#5e5e5e"/><line x1="596.2" y1="582" x2="596.2" y2="848" stroke="#6a6a6a" stroke-width="1.3"/><rect x="595.8" y="583.0" width="1.6" height="2" fill="#5e5e5e"/><rect x="595.8" y="598.4" width="1.6" height="2" fill="#5e5e5e"/><rect x="595.8" y="613.8" width="1.6" height="2" fill="#5e5e5e"/><rect x="595.8" y="629.2" width="1.6" height="2" fill="#5e5e5e"/><rect x="595.8" y="644.6" width="1.6" height="2" fill="#5e5e5e"/><rect x="595.8" y="660.0" width="1.6" height="2" fill="#5e5e5e"/><rect x="595.8" y="675.3" width="1.6" height="2" fill="#5e5e5e"/><rect x="595.8" y="690.7" width="1.6" height="2" fill="#5e5e5e"/><rect x="595.8" y="706.1" width="1.6" height="2" fill="#5e5e5e"/><rect x="595.8" y="721.5" width="1.6" height="2" fill="#5e5e5e"/><rect x="595.8" y="736.9" width="1.6" height="2" fill="#5e5e5e"/><rect x="595.8" y="752.3" width="1.6" height="2" fill="#5e5e5e"/><rect x="595.8" y="767.7" width="1.6" height="2" fill="#5e5e5e"/><rect x="595.8" y="783.1" width="1.6" height="2" fill="#5e5e5e"/><rect x="595.8" y="798.5" width="1.6" height="2" fill="#5e5e5e"/><rect x="595.8" y="813.9" width="1.6" height="2" fill="#5e5e5e"/><rect x="595.8" y="829.2" width="1.6" height="2" fill="#5e5e5e"/><rect x="595.8" y="844.6" width="1.6" height="2" fill="#5e5e5e"/><line x1="606.3" y1="582" x2="606.3" y2="848" stroke="#6a6a6a" stroke-width="1.3"/><rect x="605.9" y="583.0" width="1.6" height="2" fill="#5e5e5e"/><rect x="605.9" y="598.4" width="1.6" height="2" fill="#5e5e5e"/><rect x="605.9" y="613.8" width="1.6" height="2" fill="#5e5e5e"/><rect x="605.9" y="629.2" width="1.6" height="2" fill="#5e5e5e"/><rect x="605.9" y="644.6" width="1.6" height="2" fill="#5e5e5e"/><rect x="605.9" y="660.0" width="1.6" height="2" fill="#5e5e5e"/><rect x="605.9" y="675.3" width="1.6" height="2" fill="#5e5e5e"/><rect x="605.9" y="690.7" width="1.6" height="2" fill="#5e5e5e"/><rect x="605.9" y="706.1" width="1.6" height="2" fill="#5e5e5e"/><rect x="605.9" y="721.5" width="1.6" height="2" fill="#5e5e5e"/><rect x="605.9" y="736.9" width="1.6" height="2" fill="#5e5e5e"/><rect x="605.9" y="752.3" width="1.6" height="2" fill="#5e5e5e"/><rect x="605.9" y="767.7" width="1.6" height="2" fill="#5e5e5e"/><rect x="605.9" y="783.1" width="1.6" height="2" fill="#5e5e5e"/><rect x="605.9" y="798.5" width="1.6" height="2" fill="#5e5e5e"/><rect x="605.9" y="813.9" width="1.6" height="2" fill="#5e5e5e"/><rect x="605.9" y="829.2" width="1.6" height="2" fill="#5e5e5e"/><rect x="605.9" y="844.6" width="1.6" height="2" fill="#5e5e5e"/><line x1="616.5" y1="582" x2="616.5" y2="848" stroke="#6a6a6a" stroke-width="1.3"/><rect x="616.1" y="583.0" width="1.6" height="2" fill="#5e5e5e"/><rect x="616.1" y="598.4" width="1.6" height="2" fill="#5e5e5e"/><rect x="616.1" y="613.8" width="1.6" height="2" fill="#5e5e5e"/><rect x="616.1" y="629.2" width="1.6" height="2" fill="#5e5e5e"/><rect x="616.1" y="644.6" width="1.6" height="2" fill="#5e5e5e"/><rect x="616.1" y="660.0" width="1.6" height="2" fill="#5e5e5e"/><rect x="616.1" y="675.3" width="1.6" height="2" fill="#5e5e5e"/><rect x="616.1" y="690.7" width="1.6" height="2" fill="#5e5e5e"/><rect x="616.1" y="706.1" width="1.6" height="2" fill="#5e5e5e"/><rect x="616.1" y="721.5" width="1.6" height="2" fill="#5e5e5e"/><rect x="616.1" y="736.9" width="1.6" height="2" fill="#5e5e5e"/><rect x="616.1" y="752.3" width="1.6" height="2" fill="#5e5e5e"/><rect x="616.1" y="767.7" width="1.6" height="2" fill="#5e5e5e"/><rect x="616.1" y="783.1" width="1.6" height="2" fill="#5e5e5e"/><rect x="616.1" y="798.5" width="1.6" height="2" fill="#5e5e5e"/><rect x="616.1" y="813.9" width="1.6" height="2" fill="#5e5e5e"/><rect x="616.1" y="829.2" width="1.6" height="2" fill="#5e5e5e"/><rect x="616.1" y="844.6" width="1.6" height="2" fill="#5e5e5e"/><line x1="626.6" y1="582" x2="626.6" y2="848" stroke="#6a6a6a" stroke-width="1.3"/><rect x="626.2" y="583.0" width="1.6" height="2" fill="#5e5e5e"/><rect x="626.2" y="598.4" width="1.6" height="2" fill="#5e5e5e"/><rect x="626.2" y="613.8" width="1.6" height="2" fill="#5e5e5e"/><rect x="626.2" y="629.2" width="1.6" height="2" fill="#5e5e5e"/><rect x="626.2" y="644.6" width="1.6" height="2" fill="#5e5e5e"/><rect x="626.2" y="660.0" width="1.6" height="2" fill="#5e5e5e"/><rect x="626.2" y="675.3" width="1.6" height="2" fill="#5e5e5e"/><rect x="626.2" y="690.7" width="1.6" height="2" fill="#5e5e5e"/><rect x="626.2" y="706.1" width="1.6" height="2" fill="#5e5e5e"/><rect x="626.2" y="721.5" width="1.6" height="2" fill="#5e5e5e"/><rect x="626.2" y="736.9" width="1.6" height="2" fill="#5e5e5e"/><rect x="626.2" y="752.3" width="1.6" height="2" fill="#5e5e5e"/><rect x="626.2" y="767.7" width="1.6" height="2" fill="#5e5e5e"/><rect x="626.2" y="783.1" width="1.6" height="2" fill="#5e5e5e"/><rect x="626.2" y="798.5" width="1.6" height="2" fill="#5e5e5e"/><rect x="626.2" y="813.9" width="1.6" height="2" fill="#5e5e5e"/><rect x="626.2" y="829.2" width="1.6" height="2" fill="#5e5e5e"/><rect x="626.2" y="844.6" width="1.6" height="2" fill="#5e5e5e"/><line x1="636.7" y1="582" x2="636.7" y2="848" stroke="#6a6a6a" stroke-width="1.3"/><rect x="636.3" y="583.0" width="1.6" height="2" fill="#5e5e5e"/><rect x="636.3" y="598.4" width="1.6" height="2" fill="#5e5e5e"/><rect x="636.3" y="613.8" width="1.6" height="2" fill="#5e5e5e"/><rect x="636.3" y="629.2" width="1.6" height="2" fill="#5e5e5e"/><rect x="636.3" y="644.6" width="1.6" height="2" fill="#5e5e5e"/><rect x="636.3" y="660.0" width="1.6" height="2" fill="#5e5e5e"/><rect x="636.3" y="675.3" width="1.6" height="2" fill="#5e5e5e"/><rect x="636.3" y="690.7" width="1.6" height="2" fill="#5e5e5e"/><rect x="636.3" y="706.1" width="1.6" height="2" fill="#5e5e5e"/><rect x="636.3" y="721.5" width="1.6" height="2" fill="#5e5e5e"/><rect x="636.3" y="736.9" width="1.6" height="2" fill="#5e5e5e"/><rect x="636.3" y="752.3" width="1.6" height="2" fill="#5e5e5e"/><rect x="636.3" y="767.7" width="1.6" height="2" fill="#5e5e5e"/><rect x="636.3" y="783.1" width="1.6" height="2" fill="#5e5e5e"/><rect x="636.3" y="798.5" width="1.6" height="2" fill="#5e5e5e"/><rect x="636.3" y="813.9" width="1.6" height="2" fill="#5e5e5e"/><rect x="636.3" y="829.2" width="1.6" height="2" fill="#5e5e5e"/><rect x="636.3" y="844.6" width="1.6" height="2" fill="#5e5e5e"/><line x1="646.8" y1="582" x2="646.8" y2="848" stroke="#6a6a6a" stroke-width="1.3"/><rect x="646.4" y="583.0" width="1.6" height="2" fill="#5e5e5e"/><rect x="646.4" y="598.4" width="1.6" height="2" fill="#5e5e5e"/><rect x="646.4" y="613.8" width="1.6" height="2" fill="#5e5e5e"/><rect x="646.4" y="629.2" width="1.6" height="2" fill="#5e5e5e"/><rect x="646.4" y="644.6" width="1.6" height="2" fill="#5e5e5e"/><rect x="646.4" y="660.0" width="1.6" height="2" fill="#5e5e5e"/><rect x="646.4" y="675.3" width="1.6" height="2" fill="#5e5e5e"/><rect x="646.4" y="690.7" width="1.6" height="2" fill="#5e5e5e"/><rect x="646.4" y="706.1" width="1.6" height="2" fill="#5e5e5e"/><rect x="646.4" y="721.5" width="1.6" height="2" fill="#5e5e5e"/><rect x="646.4" y="736.9" width="1.6" height="2" fill="#5e5e5e"/><rect x="646.4" y="752.3" width="1.6" height="2" fill="#5e5e5e"/><rect x="646.4" y="767.7" width="1.6" height="2" fill="#5e5e5e"/><rect x="646.4" y="783.1" width="1.6" height="2" fill="#5e5e5e"/><rect x="646.4" y="798.5" width="1.6" height="2" fill="#5e5e5e"/><rect x="646.4" y="813.9" width="1.6" height="2" fill="#5e5e5e"/><rect x="646.4" y="829.2" width="1.6" height="2" fill="#5e5e5e"/><rect x="646.4" y="844.6" width="1.6" height="2" fill="#5e5e5e"/><line x1="656.9" y1="582" x2="656.9" y2="848" stroke="#6a6a6a" stroke-width="1.3"/><rect x="656.5" y="583.0" width="1.6" height="2" fill="#5e5e5e"/><rect x="656.5" y="598.4" width="1.6" height="2" fill="#5e5e5e"/><rect x="656.5" y="613.8" width="1.6" height="2" fill="#5e5e5e"/><rect x="656.5" y="629.2" width="1.6" height="2" fill="#5e5e5e"/><rect x="656.5" y="644.6" width="1.6" height="2" fill="#5e5e5e"/><rect x="656.5" y="660.0" width="1.6" height="2" fill="#5e5e5e"/><rect x="656.5" y="675.3" width="1.6" height="2" fill="#5e5e5e"/><rect x="656.5" y="690.7" width="1.6" height="2" fill="#5e5e5e"/><rect x="656.5" y="706.1" width="1.6" height="2" fill="#5e5e5e"/><rect x="656.5" y="721.5" width="1.6" height="2" fill="#5e5e5e"/><rect x="656.5" y="736.9" width="1.6" height="2" fill="#5e5e5e"/><rect x="656.5" y="752.3" width="1.6" height="2" fill="#5e5e5e"/><rect x="656.5" y="767.7" width="1.6" height="2" fill="#5e5e5e"/><rect x="656.5" y="783.1" width="1.6" height="2" fill="#5e5e5e"/><rect x="656.5" y="798.5" width="1.6" height="2" fill="#5e5e5e"/><rect x="656.5" y="813.9" width="1.6" height="2" fill="#5e5e5e"/><rect x="656.5" y="829.2" width="1.6" height="2" fill="#5e5e5e"/><rect x="656.5" y="844.6" width="1.6" height="2" fill="#5e5e5e"/><line x1="667.0" y1="582" x2="667.0" y2="848" stroke="#6a6a6a" stroke-width="1.3"/><rect x="666.6" y="583.0" width="1.6" height="2" fill="#5e5e5e"/><rect x="666.6" y="598.4" width="1.6" height="2" fill="#5e5e5e"/><rect x="666.6" y="613.8" width="1.6" height="2" fill="#5e5e5e"/><rect x="666.6" y="629.2" width="1.6" height="2" fill="#5e5e5e"/><rect x="666.6" y="644.6" width="1.6" height="2" fill="#5e5e5e"/><rect x="666.6" y="660.0" width="1.6" height="2" fill="#5e5e5e"/><rect x="666.6" y="675.3" width="1.6" height="2" fill="#5e5e5e"/><rect x="666.6" y="690.7" width="1.6" height="2" fill="#5e5e5e"/><rect x="666.6" y="706.1" width="1.6" height="2" fill="#5e5e5e"/><rect x="666.6" y="721.5" width="1.6" height="2" fill="#5e5e5e"/><rect x="666.6" y="736.9" width="1.6" height="2" fill="#5e5e5e"/><rect x="666.6" y="752.3" width="1.6" height="2" fill="#5e5e5e"/><rect x="666.6" y="767.7" width="1.6" height="2" fill="#5e5e5e"/><rect x="666.6" y="783.1" width="1.6" height="2" fill="#5e5e5e"/><rect x="666.6" y="798.5" width="1.6" height="2" fill="#5e5e5e"/><rect x="666.6" y="813.9" width="1.6" height="2" fill="#5e5e5e"/><rect x="666.6" y="829.2" width="1.6" height="2" fill="#5e5e5e"/><rect x="666.6" y="844.6" width="1.6" height="2" fill="#5e5e5e"/><line x1="677.1" y1="582" x2="677.1" y2="848" stroke="#6a6a6a" stroke-width="1.3"/><rect x="676.7" y="583.0" width="1.6" height="2" fill="#5e5e5e"/><rect x="676.7" y="598.4" width="1.6" height="2" fill="#5e5e5e"/><rect x="676.7" y="613.8" width="1.6" height="2" fill="#5e5e5e"/><rect x="676.7" y="629.2" width="1.6" height="2" fill="#5e5e5e"/><rect x="676.7" y="644.6" width="1.6" height="2" fill="#5e5e5e"/><rect x="676.7" y="660.0" width="1.6" height="2" fill="#5e5e5e"/><rect x="676.7" y="675.3" width="1.6" height="2" fill="#5e5e5e"/><rect x="676.7" y="690.7" width="1.6" height="2" fill="#5e5e5e"/><rect x="676.7" y="706.1" width="1.6" height="2" fill="#5e5e5e"/><rect x="676.7" y="721.5" width="1.6" height="2" fill="#5e5e5e"/><rect x="676.7" y="736.9" width="1.6" height="2" fill="#5e5e5e"/><rect x="676.7" y="752.3" width="1.6" height="2" fill="#5e5e5e"/><rect x="676.7" y="767.7" width="1.6" height="2" fill="#5e5e5e"/><rect x="676.7" y="783.1" width="1.6" height="2" fill="#5e5e5e"/><rect x="676.7" y="798.5" width="1.6" height="2" fill="#5e5e5e"/><rect x="676.7" y="813.9" width="1.6" height="2" fill="#5e5e5e"/><rect x="676.7" y="829.2" width="1.6" height="2" fill="#5e5e5e"/><rect x="676.7" y="844.6" width="1.6" height="2" fill="#5e5e5e"/><line x1="687.2" y1="582" x2="687.2" y2="848" stroke="#6a6a6a" stroke-width="1.3"/><rect x="686.8" y="583.0" width="1.6" height="2" fill="#5e5e5e"/><rect x="686.8" y="598.4" width="1.6" height="2" fill="#5e5e5e"/><rect x="686.8" y="613.8" width="1.6" height="2" fill="#5e5e5e"/><rect x="686.8" y="629.2" width="1.6" height="2" fill="#5e5e5e"/><rect x="686.8" y="644.6" width="1.6" height="2" fill="#5e5e5e"/><rect x="686.8" y="660.0" width="1.6" height="2" fill="#5e5e5e"/><rect x="686.8" y="675.3" width="1.6" height="2" fill="#5e5e5e"/><rect x="686.8" y="690.7" width="1.6" height="2" fill="#5e5e5e"/><rect x="686.8" y="706.1" width="1.6" height="2" fill="#5e5e5e"/><rect x="686.8" y="721.5" width="1.6" height="2" fill="#5e5e5e"/><rect x="686.8" y="736.9" width="1.6" height="2" fill="#5e5e5e"/><rect x="686.8" y="752.3" width="1.6" height="2" fill="#5e5e5e"/><rect x="686.8" y="767.7" width="1.6" height="2" fill="#5e5e5e"/><rect x="686.8" y="783.1" width="1.6" height="2" fill="#5e5e5e"/><rect x="686.8" y="798.5" width="1.6" height="2" fill="#5e5e5e"/><rect x="686.8" y="813.9" width="1.6" height="2" fill="#5e5e5e"/><rect x="686.8" y="829.2" width="1.6" height="2" fill="#5e5e5e"/><rect x="686.8" y="844.6" width="1.6" height="2" fill="#5e5e5e"/><line x1="697.3" y1="582" x2="697.3" y2="848" stroke="#6a6a6a" stroke-width="1.3"/><rect x="696.9" y="583.0" width="1.6" height="2" fill="#5e5e5e"/><rect x="696.9" y="598.4" width="1.6" height="2" fill="#5e5e5e"/><rect x="696.9" y="613.8" width="1.6" height="2" fill="#5e5e5e"/><rect x="696.9" y="629.2" width="1.6" height="2" fill="#5e5e5e"/><rect x="696.9" y="644.6" width="1.6" height="2" fill="#5e5e5e"/><rect x="696.9" y="660.0" width="1.6" height="2" fill="#5e5e5e"/><rect x="696.9" y="675.3" width="1.6" height="2" fill="#5e5e5e"/><rect x="696.9" y="690.7" width="1.6" height="2" fill="#5e5e5e"/><rect x="696.9" y="706.1" width="1.6" height="2" fill="#5e5e5e"/><rect x="696.9" y="721.5" width="1.6" height="2" fill="#5e5e5e"/><rect x="696.9" y="736.9" width="1.6" height="2" fill="#5e5e5e"/><rect x="696.9" y="752.3" width="1.6" height="2" fill="#5e5e5e"/><rect x="696.9" y="767.7" width="1.6" height="2" fill="#5e5e5e"/><rect x="696.9" y="783.1" width="1.6" height="2" fill="#5e5e5e"/><rect x="696.9" y="798.5" width="1.6" height="2" fill="#5e5e5e"/><rect x="696.9" y="813.9" width="1.6" height="2" fill="#5e5e5e"/><rect x="696.9" y="829.2" width="1.6" height="2" fill="#5e5e5e"/><rect x="696.9" y="844.6" width="1.6" height="2" fill="#5e5e5e"/><line x1="707.4" y1="582" x2="707.4" y2="848" stroke="#6a6a6a" stroke-width="1.3"/><rect x="707.0" y="583.0" width="1.6" height="2" fill="#5e5e5e"/><rect x="707.0" y="598.4" width="1.6" height="2" fill="#5e5e5e"/><rect x="707.0" y="613.8" width="1.6" height="2" fill="#5e5e5e"/><rect x="707.0" y="629.2" width="1.6" height="2" fill="#5e5e5e"/><rect x="707.0" y="644.6" width="1.6" height="2" fill="#5e5e5e"/><rect x="707.0" y="660.0" width="1.6" height="2" fill="#5e5e5e"/><rect x="707.0" y="675.3" width="1.6" height="2" fill="#5e5e5e"/><rect x="707.0" y="690.7" width="1.6" height="2" fill="#5e5e5e"/><rect x="707.0" y="706.1" width="1.6" height="2" fill="#5e5e5e"/><rect x="707.0" y="721.5" width="1.6" height="2" fill="#5e5e5e"/><rect x="707.0" y="736.9" width="1.6" height="2" fill="#5e5e5e"/><rect x="707.0" y="752.3" width="1.6" height="2" fill="#5e5e5e"/><rect x="707.0" y="767.7" width="1.6" height="2" fill="#5e5e5e"/><rect x="707.0" y="783.1" width="1.6" height="2" fill="#5e5e5e"/><rect x="707.0" y="798.5" width="1.6" height="2" fill="#5e5e5e"/><rect x="707.0" y="813.9" width="1.6" height="2" fill="#5e5e5e"/><rect x="707.0" y="829.2" width="1.6" height="2" fill="#5e5e5e"/><rect x="707.0" y="844.6" width="1.6" height="2" fill="#5e5e5e"/><line x1="515.5" y1="580" x2="515.5" y2="849" stroke="#857550" stroke-width="1"/><line x1="717.5" y1="580" x2="717.5" y2="849" stroke="#857550" stroke-width="1"/><line x1="515" y1="580.5" x2="718" y2="580.5" stroke="#edc862" stroke-width="2"/><rect x="515" y="846" width="203" height="2" fill="#c0c3c8"/><line x1="515" y1="848.8" x2="718" y2="848.8" stroke="#e6a818" stroke-width="1.4"/><rect x="717" y="582.8" width="1.8" height="2" fill="#6a6a6a"/><rect x="717" y="598.2" width="1.8" height="2" fill="#6a6a6a"/><rect x="717" y="613.6" width="1.8" height="2" fill="#6a6a6a"/><rect x="717" y="629.0" width="1.8" height="2" fill="#6a6a6a"/><rect x="717" y="644.4" width="1.8" height="2" fill="#6a6a6a"/><rect x="717" y="659.8" width="1.8" height="2" fill="#6a6a6a"/><rect x="717" y="675.1" width="1.8" height="2" fill="#6a6a6a"/><rect x="717" y="690.5" width="1.8" height="2" fill="#6a6a6a"/><rect x="717" y="705.9" width="1.8" height="2" fill="#6a6a6a"/><rect x="717" y="721.3" width="1.8" height="2" fill="#6a6a6a"/><rect x="717" y="736.7" width="1.8" height="2" fill="#6a6a6a"/><rect x="717" y="752.1" width="1.8" height="2" fill="#6a6a6a"/><rect x="717" y="767.5" width="1.8" height="2" fill="#6a6a6a"/><rect x="717" y="782.9" width="1.8" height="2" fill="#6a6a6a"/><rect x="717" y="798.3" width="1.8" height="2" fill="#6a6a6a"/><rect x="717" y="813.6" width="1.8" height="2" fill="#6a6a6a"/><rect x="717" y="829.0" width="1.8" height="2" fill="#6a6a6a"/><rect x="717" y="844.4" width="1.8" height="2" fill="#6a6a6a"/>
<rect x="513" y="712" width="3" height="5" fill="#ff1a1a"/><rect x="516" y="712" width="1.5" height="5" fill="#e89090"/>
<rect x="717" y="712" width="3" height="5" fill="#ff1a1a"/><rect x="715.5" y="712" width="1.5" height="5" fill="#e89090"/>
<line x1="624" y1="714.5" x2="646" y2="714.5" stroke="#ffa6a6" stroke-width="1.2"/>
<path d="M645 712 L653 714.5 L645 717 Z" fill="#ffa6a6"/>
<text x="659" y="718.5" font-family="Liberation Sans" font-size="9.5" fill="#ffacac">X'</text>
<line x1="621.7" y1="716" x2="621.7" y2="740" stroke="#5fc2f2" stroke-width="1.2"/>
<path d="M619 739 L621.7 746 L624.4 739 Z" fill="#3a7fd0"/>
<text x="616.5" y="760.5" font-family="Liberation Sans" font-size="9.5" fill="#70a8e4">Z'</text>
<path d="M620 711.5 L625 714.5 L620 717.5 Z" fill="#28a020"/>
<g stroke="#9a9a9a" stroke-width="1">
<line x1="515.5" y1="854" x2="515.5" y2="878"/><line x1="717.5" y1="854" x2="717.5" y2="878"/>
<line x1="516" y1="873" x2="594" y2="873" stroke-width="1.6"/><line x1="638" y1="873" x2="717" y2="873" stroke-width="1.6"/>
</g>
<path d="M516 873 L526 870 L526 876 Z M717 873 L707 870 L707 876 Z" fill="#9a9a9a"/>
<text x="597" y="877" font-family="Liberation Sans" font-size="11" fill="#505050">3.000 m</text>
<g fill="none" stroke="#6e6a6a" stroke-width="1.5"><rect x="1145.35" y="582.85" width="10.30" height="10.90" rx="0.9"/><rect x="1145.35" y="595.25" width="10.30" height="21.40" rx="0.9"/><rect x="1145.35" y="618.15" width="10.30" height="10.80" rx="0.9"/><rect x="1157.15" y="582.85" width="21.60" height="10.90" rx="0.9"/><rect x="1157.15" y="595.25" width="21.60" height="21.40" rx="0.9"/><rect x="1157.15" y="618.15" width="21.60" height="10.80" rx="0.9"/><rect x="1180.25" y="582.85" width="10.90" height="10.90" rx="0.9"/><rect x="1180.25" y="595.25" width="10.90" height="21.40" rx="0.9"/><rect x="1180.25" y="618.15" width="10.90" height="10.80" rx="0.9"/></g>
<text x="1163.5" y="611" font-family="Liberation Sans" font-size="10.5" font-weight="bold" fill="#4cb84c">-y</text>
</svg>
<div class="btn" style="left:1219px;top:571px;width:37px;height:21px"></div>
<svg class="a" style="left:1219px;top:571px" width="37" height="21">
 <path d="M2 6 L6 3 L16 3 L16 13 L12 16 L2 16 Z" fill="#c8cce4" stroke="#7a80a8" stroke-width="0.8"/>
 <path d="M2 6 L12 6 L16 3 M12 6 L12 16" stroke="#7a80a8" stroke-width="0.8" fill="none"/>
 <path d="M27 9 L33 9 L30 12 Z" fill="#111"/>
</svg>
<div class="btn" style="left:1219px;top:595px;width:37px;height:21px"></div>
<svg class="a" style="left:1219px;top:595px" width="37" height="21">
 <circle cx="4.5" cy="4.5" r="1.8" fill="#20a040"/><path d="M4.5 4.5 L13 4.5" stroke="#e04010" stroke-width="1"/><path d="M12 2.5 L15 4.5 L12 6.5 Z" fill="#e04010"/>
 <path d="M4.5 5 L4.5 14" stroke="#1030d0" stroke-width="1"/><path d="M2.5 13 L4.5 16 L6.5 13 Z" fill="#1030d0"/>
 <text x="8" y="17" font-family="Liberation Sans" font-size="11" font-weight="bold" fill="#111">-y</text>
 <path d="M27 9 L33 9 L30 12 Z" fill="#111"/>
</svg>
<div class="btn" style="left:1219px;top:619px;width:37px;height:21px"></div>
<svg class="a" style="left:1219px;top:619px" width="37" height="21">
 <path d="M2 4.5 L5 2.5 L10.5 2.5 L10.5 8.5 L13 8.5 L16 6.5 L16 14.5 L13 17 L5 17 L2 15 Z" fill="#c6d2e6" stroke="#8c98b0" stroke-width="0.7"/>
 <path d="M2 4.5 L7.5 4.5 L10.5 2.5 M7.5 4.5 L7.5 10.5 L13 10.5 L16 8.5 M7.5 10.5 L2 10.5 M13 10.5 L13 17" stroke="#8c98b0" stroke-width="0.7" fill="none"/>
 <rect x="8" y="4.8" width="2.3" height="5.5" fill="#9aaccc"/><rect x="13.2" y="10.8" width="2.6" height="5.8" fill="#9aaccc"/>
 <path d="M27 9 L33 9 L30 12 Z" fill="#111"/>
</svg>
<div class="btn" style="left:1219px;top:643px;width:37px;height:21px"></div>
<svg class="a" style="left:1219px;top:643px" width="37" height="21">
 <path d="M9.5 16 L9.5 5" stroke="#1030c0" stroke-width="1"/><path d="M7.5 6 L9.5 2.5 L11.5 6 Z" fill="#1030c0"/>
 <path d="M9.5 16 L15 17.5" stroke="#e04010" stroke-width="1"/><path d="M14 15.5 L17 18 L13.5 19 Z" fill="#e04010"/>
 <path d="M9.5 16 L4 17.5" stroke="#20a040" stroke-width="1"/><path d="M5 15.5 L2 18 L5.5 19 Z" fill="#20a040"/>
 <circle cx="9.5" cy="16" r="1.3" fill="#f0e020"/>
 <path d="M27 9 L33 9 L30 12 Z" fill="#111"/>
</svg>
<div class="btn" style="left:1219px;top:797px;width:25px;height:21px"></div>
<svg class="a" style="left:1219px;top:797px" width="25" height="21">
 <path d="M5.5 8 Q12.5 16 19.5 8" stroke="#5a80c0" stroke-width="1.2" fill="none"/>
 <path d="M6 9.5 Q12.5 17 19 9.5" stroke="#a8c0e0" stroke-width="0.8" fill="none"/>
 <circle cx="5.5" cy="8" r="1.4" fill="#e02020"/><circle cx="19.5" cy="8" r="1.4" fill="#e02020"/>
</svg>
<div class="btn" style="left:1219px;top:821px;width:37px;height:21px"></div>
<svg class="a" style="left:1219px;top:821px" width="37" height="21">
 <rect x="5.5" y="2" width="9.5" height="3.5" fill="#555"/>
 <path d="M2 7 Q2 6 3 6 L17 6 Q18 6 18 7 L18 14 L2 14 Z" fill="#555"/>
 <rect x="5.5" y="11" width="9.5" height="7.5" fill="#fff" stroke="#555" stroke-width="1"/>
 <path d="M7 13.5 L13.5 13.5 M7 16 L13.5 16" stroke="#555" stroke-width="1"/>
 <path d="M27 9 L33 9 L30 12 Z" fill="#111"/>
</svg>
<div class="btn" style="left:1219px;top:852px;width:25px;height:21px"></div>
<svg class="a" style="left:1219px;top:852px" width="25" height="21">
 <path d="M4 2.5 L9 2.5 M13 2.5 L20 2.5 M4 4.8 L20 4.8" stroke="#3040b0" stroke-width="0.9"/>
 <rect x="4" y="9" width="16" height="4.5" fill="#d8d8d8" stroke="#888" stroke-width="0.7"/>
 <path d="M6.5 9.5 Q8 6 11.5 6.5 Q14 6 15.5 8 L16 10.5 L8 11 Z" fill="#d9b594" stroke="#9a7a60" stroke-width="0.5"/>
 <path d="M16 5 L19.5 8.5 L16.5 9.5 Z" fill="#4a7ad0"/>
 <path d="M4 15 L20 15" stroke="#3040b0" stroke-width="0.9"/>
 <path d="M7 18 L17 18" stroke="#20308a" stroke-width="1.2"/>
</svg>
<div class="btn" style="left:1219px;top:876px;width:25px;height:21px"></div>
<svg class="a" style="left:1219px;top:876px" width="25" height="21">
 <circle cx="9.5" cy="10" r="4.2" stroke="#555" stroke-width="1.6" fill="none"/>
 <path d="M12.5 13 L16.5 17" stroke="#555" stroke-width="1.8"/>
 <path d="M12 3 L18 9 M18 3 L12 9" stroke="#ff0000" stroke-width="2"/>
</svg>

<!-- footer icons -->
<div class="btn" style="left:10px;top:927px;width:25px;height:21px"></div>
<svg class="a" style="left:10px;top:927px" width="25" height="21">
 <circle cx="13" cy="9" r="5.8" fill="#606060"/>
 <path d="M9.5 12.5 L6 17.5 L13 14 Z" fill="#606060"/>
 <path d="M11 7.3 Q11 5.3 13 5.3 Q15 5.3 15 7.1 Q15 8.3 13.3 9.1 L13.2 10.3" stroke="#fff" stroke-width="1.5" fill="none"/>
 <rect x="12.4" y="11.3" width="1.6" height="1.6" fill="#fff"/>
</svg>
<div class="btn" style="left:45px;top:927px;width:25px;height:21px"></div>
<svg class="a" style="left:45px;top:927px" width="25" height="21">
 <rect x="4" y="2" width="16" height="4.5" fill="#8fd07a"/>
 <path d="M6 4.5 L6 6.5 M8.5 4.5 L8.5 6.5 M11 4.5 L11 6.5 M13.5 4.5 L13.5 6.5 M16 4.5 L16 6.5" stroke="#5a9a50" stroke-width="0.6"/>
 <text x="3.5" y="16.5" font-family="Liberation Sans" font-size="10.5" font-weight="bold" fill="#111">0,</text>
 <text x="11.5" y="16.5" font-family="Liberation Sans" font-size="10.5" fill="#3a78e0">00</text>
 <rect x="12" y="18" width="8.5" height="1" fill="#3a78e0"/>
</svg>
<div class="btn" style="left:80px;top:927px;width:25px;height:21px"></div>
<svg class="a" style="left:80px;top:927px" width="25" height="21">
 <rect x="4" y="2" width="3.3" height="3.3" fill="#f01010"/><rect x="7.3" y="2" width="3.3" height="3.3" fill="#f0e010"/>
 <rect x="4" y="5.3" width="3.3" height="3.3" fill="#10d010"/><rect x="7.3" y="5.3" width="3.3" height="3.3" fill="#4050f0"/>
 <path d="M4.5 16 L7.5 9 L10.5 16 M5.7 13.5 L9.3 13.5" stroke="#111" stroke-width="1.2" fill="none"/>
 <path d="M4.5 17.8 L5.5 17.8 M7 17.8 L8.5 17.8 M9.5 17.8 L11 17.8" stroke="#111" stroke-width="1.2"/>
 <rect x="11.5" y="7.5" width="8.5" height="6" fill="#f4f4f4" stroke="#666" stroke-width="1"/>
 <rect x="14" y="7" width="6" height="1.8" fill="#2a40a0"/>
</svg>
<div class="btn" style="left:115px;top:927px;width:25px;height:21px"></div>
<svg class="a" style="left:115px;top:927px" width="25" height="21">
 <rect x="4.5" y="3.5" width="15" height="11" fill="none" stroke="#777" stroke-width="1"/>
 <path d="M12 14.5 L12 16.5 M8 17.5 L16 17.5" stroke="#555" stroke-width="1.2"/>
 <path d="M6.5 9.5 Q9 5.5 13 5 Q16.5 5.5 17.5 8 L16 12.5 Q13 9 8 10 Z" fill="#3a70c8"/>
 <path d="M8.5 9 L15 11 M10 7 L14 12 M13 6 L12.5 11" stroke="#a8c8f0" stroke-width="0.6"/>
</svg>
<div class="btn" style="left:150px;top:927px;width:25px;height:21px"></div>
<svg class="a" style="left:150px;top:927px" width="25" height="21">
 <path d="M5 9.5 L8.5 9.5 L10.5 11.5 L10.5 17.5 L5 17.5 Z" fill="#fff" stroke="#505050" stroke-width="1.1"/>
 <path d="M6.5 12.5 L8.5 12.5 M6.5 14.5 L9 14.5 M6.5 16.2 L9 16.2" stroke="#505050" stroke-width="0.9"/>
 <path d="M11.5 6.5 L11.5 16 L13.5 14 L15.5 18 L17 17.3 L15 13.3 L18 13.3 Z" fill="#f0f0f0" stroke="#909090" stroke-width="0.7"/>
 <path d="M8.5 2.5 L13 6.5 M13 2.5 L8.5 6.5" stroke="#ff2020" stroke-width="1.3"/>
</svg>
<div class="btn" style="left:185px;top:927px;width:25px;height:21px"></div>
<svg class="a" style="left:185px;top:927px" width="25" height="21">
 <g transform="rotate(-45 12.5 10.5)" fill="none" stroke="#5a5a5a" stroke-width="2.2">
 <rect x="3.5" y="7.8" width="10" height="5.4" rx="2.7"/><rect x="11.5" y="7.8" width="10" height="5.4" rx="2.7"/>
 </g>
</svg>
<div class="a" style="left:213px;top:927px;width:25px;height:21px;background:#e6e6e6"></div>
<svg class="a" style="left:213px;top:927px" width="25" height="21">
 <path d="M12 13 L12 7 Q12 4 15 4 Q18 4 18 7 L18 11" fill="none" stroke="#a8a8a8" stroke-width="1.8"/>
 <path d="M13 11 L13 15 Q13 18 10 18 Q6.5 18 6.5 15 Q6.5 12 9 11" fill="none" stroke="#a8a8a8" stroke-width="1.8"/>
 <path d="M5 6 L7.5 8.5 M9.5 4 L9.5 7 M4 10 L7 10 M20 15 L22.5 17.5 M16 15 L16 18 M19 13 L22 13" stroke="#a8a8a8" stroke-width="0.9"/>
</svg>
<div class="btn" style="left:248px;top:927px;width:25px;height:21px"></div>
<svg class="a" style="left:248px;top:927px" width="25" height="21">
 <text x="4" y="17" font-family="Liberation Serif" font-size="14" font-style="italic" fill="#111">f</text>
 <text x="10" y="17" font-family="Liberation Serif" font-size="11" font-style="italic" fill="#111">x</text>
 <ellipse cx="15.5" cy="5.5" rx="4.2" ry="2.6" fill="#fff" stroke="#303070" stroke-width="1"/>
 <circle cx="15.5" cy="5.5" r="1.8" fill="#3a5cd0"/><circle cx="15.5" cy="5.5" r="0.7" fill="#111"/>
</svg>
<svg class="a" style="left:1266px;top:947px" width="12" height="12" shape-rendering="crispEdges">
 <g fill="#a0a0a0"><rect x="9" y="2" width="2" height="2"/><rect x="5" y="5" width="2" height="2"/><rect x="9" y="5" width="2" height="2"/><rect x="2" y="8" width="2" height="2"/><rect x="5" y="8" width="2" height="2"/><rect x="9" y="8" width="2" height="2"/></g>
</svg>
<svg class="a" style="left:18px;top:559px" width="8" height="8"><rect x="1" y="1.5" width="2" height="2" fill="#888"/><rect x="3.5" y="1.8" width="2" height="1" fill="#ccc"/><rect x="1" y="4" width="1.5" height="1.5" fill="#ccc"/></svg>
<svg class="a" style="left:1209px;top:893px" width="8" height="8"><path d="M4.5 2 L4.5 6.5 M2 6.5 L4.5 6.5" stroke="#aaa" stroke-width="0.8"/></svg>
<svg class="a" style="left:1210px;top:558px" width="8" height="6"><path d="M4.5 1 L4.5 5 M4.5 1 L7 1" stroke="#aaa" stroke-width="0.8"/></svg>

<!-- title bar icons -->
<svg class="a" style="left:0;top:0" width="40" height="31">
 <path d="M9 13.5 L13 9.5 L18 7.5 L23 9 L25 12 L22 15.5 L18 17.5 L14 15.5 Z" fill="#7f97b8" stroke="#505a70" stroke-width="0.6"/>
 <path d="M12 11 L22 14 M15 8.5 L21 16 M18.5 8 L17 17 M10.5 13 L23.5 11" stroke="#b8d4f0" stroke-width="0.8"/>
 <path d="M18.6 12.2 C16 11.4 13.2 12.4 11.8 14.6 C10.2 17 10 20 11.4 21.6 C12.8 23.2 16.2 23.2 17.8 21.6 C19.6 19.8 19.2 16.6 16.8 15.8 C15.6 15.4 14.4 15.6 13.6 16.2 C14.2 14.6 16 13.8 17.8 14.4 Z" fill="#ffd42a" stroke="#5a4a20" stroke-width="0.6"/>
 <circle cx="14.6" cy="18.6" r="1.4" fill="#0078d7"/>
</svg>
<div class="a" style="left:1160px;top:15px;width:10px;height:1px;background:#5fa0e4"></div>
<div class="a" style="left:1205px;top:10px;width:10px;height:10px;border:1px solid #fff"></div>
<svg class="a" style="left:1250px;top:9px" width="12" height="12"><path d="M1 1 L11 11 M11 1 L1 11" stroke="#fff" stroke-width="1.1"/></svg>
<svg class="a" style="left:1240px;top:62px" width="25" height="20">
 <path d="M5.5 2.5 L9.5 6.5 M9.5 2.5 L5.5 6.5" stroke="#9a9a9a" stroke-width="1"/>
 <path d="M9 5 L9 15.5 L11.5 13 L13.5 17.5 L15 16.8 L13 12.5 L16.5 12.5 Z" fill="#f4f4f4" stroke="#a0a0a0" stroke-width="0.8"/>
</svg>


<!-- footer buttons -->
<div class="a" style="left:1006px;top:928px;width:81px;height:21px;border:2px solid #0078d7;background:#e1e1e1;text-align:center;line-height:20px">OK</div>
<div class="a" style="left:1097px;top:928px;width:81px;height:21px;border:1px solid #adadad;background:#e1e1e1;text-align:center;line-height:22px">Annuler</div>
<div class="a" style="left:1188px;top:928px;width:81px;height:21px;border:1px solid #bfbfbf;background:#cccccc;color:#838383;text-align:center;line-height:22px">Appliquer</div>
</body></html>
